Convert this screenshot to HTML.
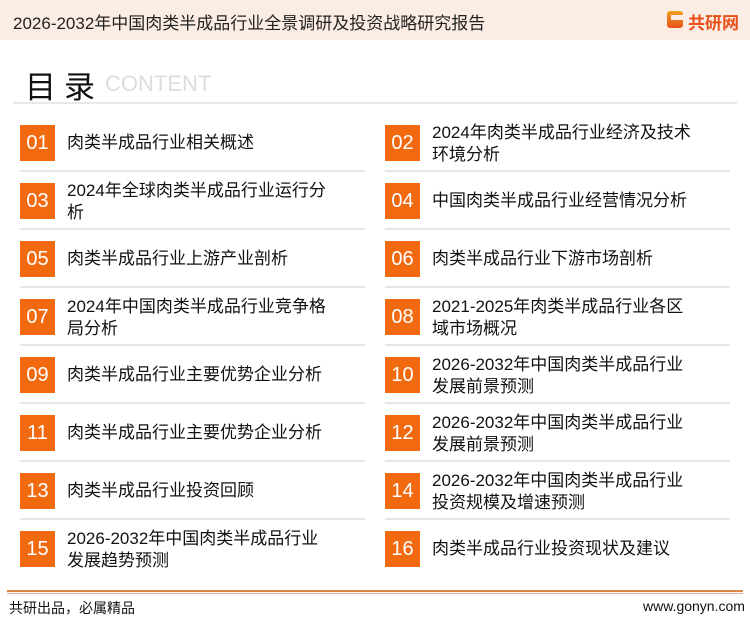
<!DOCTYPE html>
<html><head><meta charset="utf-8"><style>
*{margin:0;padding:0;box-sizing:border-box}
body{width:750px;height:622px;background:#fff;position:relative;overflow:hidden;font-family:"Liberation Sans","Noto Sans CJK SC",sans-serif;color:#111}
.hdr{position:absolute;left:0;top:0;width:750px;height:40px;background:#fcede4}
.hdr .t{position:absolute;left:13px;top:9px;font-size:17px;color:#222}
.logo{position:absolute;left:667px;top:11px;width:16px;height:17px;background:linear-gradient(#f0a020,#e8501a);border-radius:3px}
.logo:after{content:"";position:absolute;left:4px;top:4px;width:12px;height:5px;background:#fcede4}
.lt{position:absolute;left:688px;top:9px;font-size:17px;font-weight:bold;color:#e8501a}
.ml{position:absolute;left:25px;top:62px;font-size:31px;color:#111;letter-spacing:8px}
.ct{position:absolute;left:105px;top:71px;font-size:22px;color:#ddd}
.hl{position:absolute;left:13px;top:102px;width:724px;height:2px;background:#e8e8e8}
.box{position:absolute;width:35px;height:36px;background:#f26a10;color:#fff;font-size:20px;text-align:center;line-height:36px}
.tx{position:absolute;font-size:17px;line-height:22px;color:#111}
.sep{position:absolute;height:2px;background:#e6e6e6;width:345px}
.fl{position:absolute;left:7px;top:590px;width:736px;height:4px;border-top:2px solid #d9874a;border-bottom:1px solid #e8b090}
.ft{position:absolute;top:598px;font-size:14px;color:#111}
</style></head><body>
<div class="hdr"><div class="t">2026-2032年中国肉类半成品行业全景调研及投资战略研究报告</div><div class="logo"></div><div class="lt">共研网</div></div>
<div class="ml">目录</div><div class="ct">CONTENT</div><div class="hl"></div>

<div class="box" style="left:20px;top:125px">01</div><div class="tx" style="left:67px;top:132px">肉类半成品行业相关概述</div>
<div class="box" style="left:385px;top:125px">02</div><div class="tx" style="left:432px;top:122px">2024年肉类半成品行业经济及技术<br>环境分析</div>
<div class="sep" style="left:20px;top:170px"></div><div class="sep" style="left:385px;top:170px"></div>

<div class="box" style="left:20px;top:183px">03</div><div class="tx" style="left:67px;top:180px">2024年全球肉类半成品行业运行分<br>析</div>
<div class="box" style="left:385px;top:183px">04</div><div class="tx" style="left:432px;top:190px">中国肉类半成品行业经营情况分析</div>
<div class="sep" style="left:20px;top:228px"></div><div class="sep" style="left:385px;top:228px"></div>

<div class="box" style="left:20px;top:241px">05</div><div class="tx" style="left:67px;top:248px">肉类半成品行业上游产业剖析</div>
<div class="box" style="left:385px;top:241px">06</div><div class="tx" style="left:432px;top:248px">肉类半成品行业下游市场剖析</div>
<div class="sep" style="left:20px;top:286px"></div><div class="sep" style="left:385px;top:286px"></div>

<div class="box" style="left:20px;top:299px">07</div><div class="tx" style="left:67px;top:296px">2024年中国肉类半成品行业竞争格<br>局分析</div>
<div class="box" style="left:385px;top:299px">08</div><div class="tx" style="left:432px;top:296px">2021-2025年肉类半成品行业各区<br>域市场概况</div>
<div class="sep" style="left:20px;top:344px"></div><div class="sep" style="left:385px;top:344px"></div>

<div class="box" style="left:20px;top:357px">09</div><div class="tx" style="left:67px;top:364px">肉类半成品行业主要优势企业分析</div>
<div class="box" style="left:385px;top:357px">10</div><div class="tx" style="left:432px;top:354px">2026-2032年中国肉类半成品行业<br>发展前景预测</div>
<div class="sep" style="left:20px;top:402px"></div><div class="sep" style="left:385px;top:402px"></div>

<div class="box" style="left:20px;top:415px">11</div><div class="tx" style="left:67px;top:422px">肉类半成品行业主要优势企业分析</div>
<div class="box" style="left:385px;top:415px">12</div><div class="tx" style="left:432px;top:412px">2026-2032年中国肉类半成品行业<br>发展前景预测</div>
<div class="sep" style="left:20px;top:460px"></div><div class="sep" style="left:385px;top:460px"></div>

<div class="box" style="left:20px;top:473px">13</div><div class="tx" style="left:67px;top:480px">肉类半成品行业投资回顾</div>
<div class="box" style="left:385px;top:473px">14</div><div class="tx" style="left:432px;top:470px">2026-2032年中国肉类半成品行业<br>投资规模及增速预测</div>
<div class="sep" style="left:20px;top:518px"></div><div class="sep" style="left:385px;top:518px"></div>

<div class="box" style="left:20px;top:531px">15</div><div class="tx" style="left:67px;top:528px">2026-2032年中国肉类半成品行业<br>发展趋势预测</div>
<div class="box" style="left:385px;top:531px">16</div><div class="tx" style="left:432px;top:538px">肉类半成品行业投资现状及建议</div>

<div class="fl"></div>
<div class="ft" style="left:9px">共研出品，必属精品</div>
<div class="ft" style="left:643px">www.gonyn.com</div>
</body></html>
